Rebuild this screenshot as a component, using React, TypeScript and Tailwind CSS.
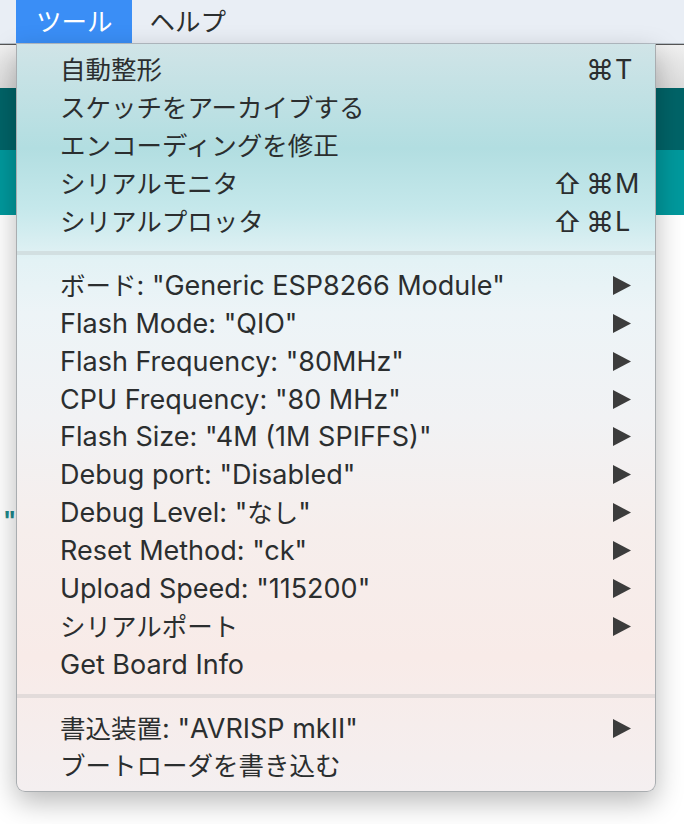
import React from "react";

const jp = { fontFamily: '"Inter", "Noto Sans CJK JP", sans-serif' };

type Item = { label: string; mods?: string[]; key?: string; sub?: boolean };

const groups: Item[][] = [
  [
    { label: "自動整形", mods: ["⌘"], key: "T" },
    { label: "スケッチをアーカイブする" },
    { label: "エンコーディングを修正" },
    { label: "シリアルモニタ", mods: ["⇧", "⌘"], key: "M" },
    { label: "シリアルプロッタ", mods: ["⇧", "⌘"], key: "L" },
  ],
  [
    { label: 'ボード: "Generic ESP8266 Module"', sub: true },
    { label: 'Flash Mode: "QIO"', sub: true },
    { label: 'Flash Frequency: "80MHz"', sub: true },
    { label: 'CPU Frequency: "80 MHz"', sub: true },
    { label: 'Flash Size: "4M (1M SPIFFS)"', sub: true },
    { label: 'Debug port: "Disabled"', sub: true },
    { label: 'Debug Level: "なし"', sub: true },
    { label: 'Reset Method: "ck"', sub: true },
    { label: 'Upload Speed: "115200"', sub: true },
    { label: "シリアルポート", sub: true },
    { label: "Get Board Info" },
  ],
  [
    { label: '書込装置: "AVRISP mkII"', sub: true },
    { label: "ブートローダを書き込む" },
  ],
];

// latin runs are set a bit larger than the kana so widths line up with the mac font
function Label({ text }: { text: string }) {
  const parts = text.split(/([\u3000-\u30ff\u4e00-\u9fff]+)/).filter(Boolean);
  return (
    <span className="flex-1 whitespace-nowrap">
      {parts.map((p, i) =>
        /[\u3000-\u30ff\u4e00-\u9fff]/.test(p) ? (
          <span key={i}>{p}</span>
        ) : (
          <span key={i} className="text-[27px]">{p}</span>
        )
      )}
    </span>
  );
}

function Arrow() {
  return (
    <svg width="18" height="19" viewBox="0 0 18 19" className="shrink-0">
      <path d="M0 0 L18 9.5 L0 19 Z" fill="#3c3c3c" />
    </svg>
  );
}

function Row({ item }: { item: Item }) {
  return (
    <div className="flex items-center h-[37.9px] pl-[43px] pr-[24px] text-[25.5px] text-[#2b2e2f] leading-none">
      <Label text={item.label} />
      {item.key && (
        <span
          className="flex items-center text-[27px] -mr-[9px]"
          style={{ fontFamily: '"Inter", "DejaVu Sans", sans-serif' }}
        >
          <span className="flex gap-[4px] text-[28px]">
            {item.mods?.map((m) => <span key={m}>{m}</span>)}
          </span>
          <span className="w-[26px] pl-[1px]">{item.key}</span>
        </span>
      )}
      {item.sub && <Arrow />}
    </div>
  );
}

export default function App() {
  return (
    <div className="relative w-[684px] h-[824px] overflow-hidden bg-white" style={jp}>
      {/* menubar */}
      <div className="flex h-[44px] bg-[#e9eef5] border-b border-[#b7bfc7] text-[25.5px] leading-none">
        <div className="w-[16px]" />
        <div className="flex items-center bg-[#3a8ef6] text-white pl-[20px] pr-[19px]">ツール</div>
        <div className="flex items-center text-[#2b2e2f] pl-[18px]">ヘルプ</div>
      </div>

      {/* window behind the menu */}
      <div className="h-[44px] bg-gradient-to-b from-[#f0f0f0] to-[#dcdcdc] border-t border-[#555]" />
      <div className="h-[62px] bg-[#006468]" />
      <div className="h-[65px] bg-[#00999d]" />
      <div className="pt-[288px] pl-[3px] text-[24px] font-bold text-[#1f8a8c]">"</div>

      {/* menu */}
      <div className="absolute left-[16px] top-[44px] w-[640px] h-[748px] rounded-b-[9px] border-x border-b border-[#a9adb0] shadow-[0_10px_28px_rgba(0,0,0,0.28)] bg-[linear-gradient(180deg,#d0e4e7_0%,#b2dee1_14%,#c5e8eb_22%,#e3f2f5_29%,#edf4f7_36%,#f1f2f4_50%,#f6eeec_65%,#f8ebe8_82%,#f4eff0_100%)] pt-[7px]">
        {groups.map((g, gi) => (
          <div key={gi}>
            {gi > 0 && (
              <div className="py-[11px]">
                <div className={`h-[4px] ${gi === 1 ? "bg-[#d2dfe1]" : "bg-[#e2dbda]"}`} />
              </div>
            )}
            {g.map((it) => (
              <Row key={it.label} item={it} />
            ))}
          </div>
        ))}
      </div>
    </div>
  );
}
